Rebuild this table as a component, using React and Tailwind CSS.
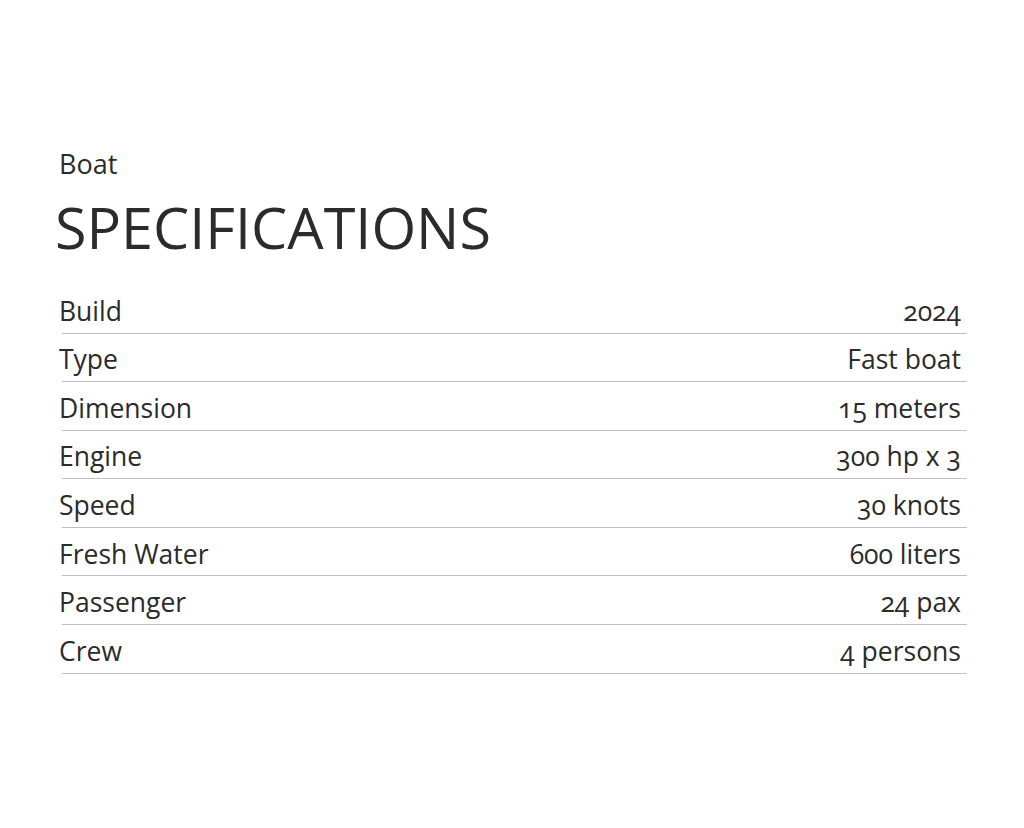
import React from 'react';

const specs = [
  ['Build', '2024'],
  ['Type', 'Fast boat'],
  ['Dimension', '15 meters'],
  ['Engine', '300 hp x 3'],
  ['Speed', '30 knots'],
  ['Fresh Water', '600 liters'],
  ['Passenger', '24 pax'],
  ['Crew', '4 persons'],
];

export default function App() {
  return (
    <div className="min-h-[828px] w-[1024px] bg-white text-[#2b2b2b] font-['Open_Sans',sans-serif] oldstyle-nums">
      <div className="pt-[146px] pl-[59px]">
        <p className="text-[27px] leading-[36px]">Boat</p>
        <h1 className="-ml-[4px] mt-[13px] text-[57.5px] leading-[64px]">SPECIFICATIONS</h1>
      </div>
      <div className="mt-[26px] ml-[62px] w-[905px]">
        {specs.map(([label, value]) => (
          <div
            key={label}
            className="flex h-[48.57px] items-center justify-between border-b border-[#bfbfbf] pr-[6px] text-[26.5px] leading-[36px]"
          >
            <span className="-ml-[3px] mt-[4px]">{label}</span>
            <span className="mt-[4px]">{value}</span>
          </div>
        ))}
      </div>
    </div>
  );
}
